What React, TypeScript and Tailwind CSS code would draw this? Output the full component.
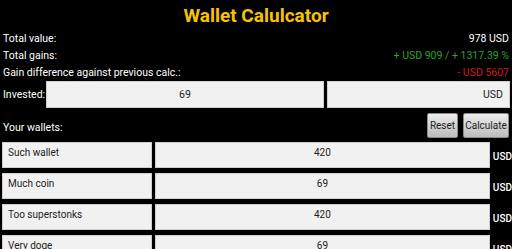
import React from "react";

const wallets = [
  { name: "Such wallet", value: "420" },
  { name: "Much coin", value: "69" },
  { name: "Too superstonks", value: "420" },
  { name: "Very doge", value: "69" },
];

const field = "bg-[#f1f1f1] border border-[#cfcfcf] text-[#222] text-[10.5px]";

export default function App() {
  return (
    <div className="w-[512px] h-[249px] overflow-hidden bg-black text-white font-['Roboto',sans-serif]">
      <h1 className="h-[30px] pt-[3px] flex items-center justify-center text-[19px] font-bold text-[#f8c400]">
        Wallet Calulcator
      </h1>

      <div className="px-[3px] text-[10.5px]">
        <div className="h-[17px] flex items-center justify-between">
          <span>Total value:</span>
          <span>978 USD</span>
        </div>
        <div className="h-[17px] flex items-center justify-between">
          <span>Total gains:</span>
          <span className="text-[#2aa52a]">+ USD 909 / + 1317.39 %</span>
        </div>
        <div className="h-[17px] flex items-center justify-between">
          <span>Gain difference against previous calc.:</span>
          <span className="text-[#d01c1c]">- USD 5607</span>
        </div>
      </div>

      <div className="flex items-center h-[27px] pl-[3px] pr-[2px] gap-[3px]">
        <span className="w-[40px] text-[10.5px]">Invested:</span>
        <div className={`${field} flex-1 h-full flex items-center justify-center`}>69</div>
        <div className={`${field} w-[183px] h-full flex items-center justify-end pr-[6px]`}>USD</div>
      </div>

      <div className="mt-[5px] h-[25px] flex items-center justify-between pl-[3px] pr-[3px]">
        <span className="text-[10.5px] pt-[4px]">Your wallets:</span>
        <div className="flex gap-[5px] h-full">
          <button className="w-[31px] h-full rounded-[2px] border border-[#8a8a8a] bg-gradient-to-b from-[#ececec] to-[#bcbcbc] text-[10px] text-[#222]">
            Reset
          </button>
          <button className="w-[46px] h-full rounded-[2px] border border-[#8a8a8a] bg-gradient-to-b from-[#ececec] to-[#bcbcbc] text-[10px] text-[#222]">
            Calculate
          </button>
        </div>
      </div>

      <div className="mt-[4px] flex flex-col gap-[5px] pl-[2px]">
        {wallets.map((w, i) => (
          <div key={i} className="flex h-[26px] gap-[3px]">
            <div className={`${field} w-[150px] h-full pl-[5px] pt-[4px] leading-[12px] text-[10px]`}>{w.name}</div>
            <div className={`${field} w-[335px] h-full pt-[4px] leading-[12px] text-[10px] text-center`}>{w.value}</div>
            <span className="self-end pb-[5px] text-[10px] font-medium leading-[12px]">USD</span>
          </div>
        ))}
      </div>
    </div>
  );
}
